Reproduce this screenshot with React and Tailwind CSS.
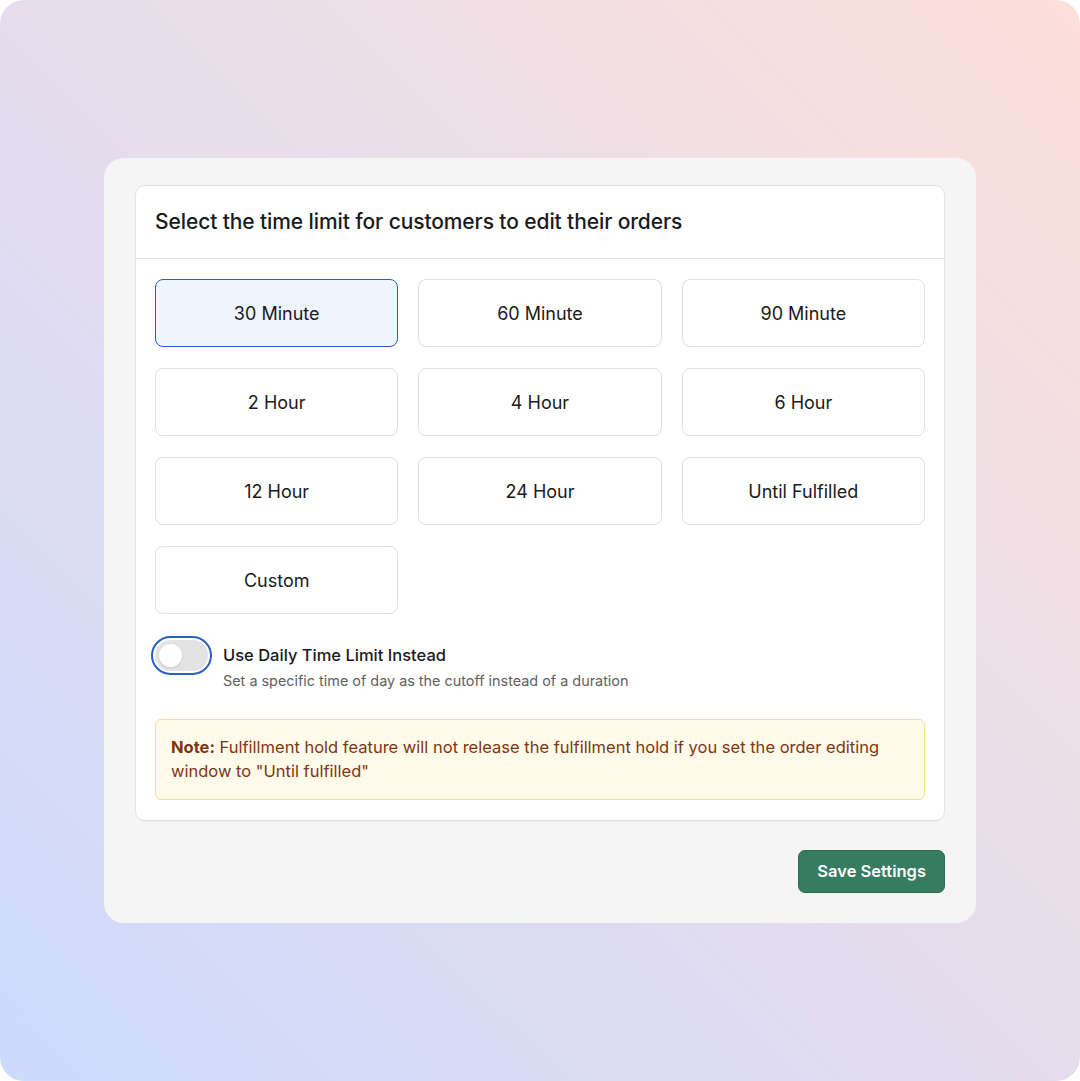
import React, { useState } from 'react';

const OPTIONS = [
  '30 Minute',
  '60 Minute',
  '90 Minute',
  '2 Hour',
  '4 Hour',
  '6 Hour',
  '12 Hour',
  '24 Hour',
  'Until Fulfilled',
  'Custom',
];

const App = () => {
  const [selected, setSelected] = useState('30 Minute');
  const [daily, setDaily] = useState(false);

  return (
    <div className="w-[1080px] h-[1081px] bg-white" style={{ fontFamily: 'Inter, "Noto Sans", sans-serif' }}>
      <div className="w-full h-full rounded-[24px] bg-[linear-gradient(45deg,#ccdafd_0%,#e3dcee_45%,#ecdfe7_65%,#fddfda_100%)] flex items-center justify-center">
        <div className="w-[872px] bg-[#f5f5f5] rounded-[20px] pt-[27px] pb-[30px] px-[31px] flex flex-col">
          <div className="bg-white border border-[#e3e3e3] rounded-[10px] shadow-[0_1px_1px_rgba(0,0,0,0.04)]">
            <div className="h-[73px] px-[19px] flex items-center border-b border-[#e3e3e3]">
              <h2 className="text-[21px] font-medium text-[#1a1a1a] tracking-[-0.1px]">
                Select the time limit for customers to edit their orders
              </h2>
            </div>
            <div className="px-[19px] pt-[20px] pb-[20px]">
              <div className="grid grid-cols-3 gap-x-[20px] gap-y-[21px]">
                {OPTIONS.map((opt) => {
                  const active = opt === selected;
                  return (
                    <button
                      key={opt}
                      onClick={() => setSelected(opt)}
                      className={
                        active
                          ? 'h-[68px] rounded-[8px] border border-[#2c5ec4] bg-[#eef5fe] text-[18px] text-[#1a1a1a]'
                          : 'h-[68px] rounded-[8px] border border-[#e0e0e0] bg-white text-[18px] text-[#1a1a1a]'
                      }
                    >
                      {opt}
                    </button>
                  );
                })}
              </div>

              <div className="mt-[22px] flex items-start gap-[11px]">
                <button
                  onClick={() => setDaily(!daily)}
                  className="-ml-[4px] w-[61px] h-[39px] rounded-full border-[2px] border-[#2c5ec4] p-[2px] shrink-0"
                >
                  <span className="block w-full h-full rounded-full bg-[#e3e3e3] relative">
                    <span
                      className={
                        daily
                          ? 'absolute top-[4px] right-[4px] w-[23px] h-[23px] rounded-full bg-white shadow-sm'
                          : 'absolute top-[4px] left-[4px] w-[23px] h-[23px] rounded-full bg-white shadow-sm'
                      }
                    />
                  </span>
                </button>
                <div className="pt-[8px]">
                  <div className="text-[16.5px] font-medium text-[#1a1a1a] leading-[22px]">Use Daily Time Limit Instead</div>
                  <div className="text-[14.4px] text-[#616161] leading-[20px] mt-[5px]">
                    Set a specific time of day as the cutoff instead of a duration
                  </div>
                </div>
              </div>

              <div className="mt-[28px] rounded-[6px] border border-[#f3e08f] bg-[#fefbeb] px-[15px] pt-[15px] pb-[16px] text-[16.5px] leading-[24px] text-[#7f3514]">
                <p>
                  <strong className="font-bold">Note:</strong> Fulfillment hold feature will not release the fulfillment hold if you set the order editing window to "Until fulfilled"
                </p>
              </div>
            </div>
          </div>

          <div className="flex justify-end mt-[29px]">
            <button className="h-[43px] px-[18px] rounded-[7px] bg-[#367c60] border border-[#2b6b51] text-white text-[16.5px] font-semibold">
              Save Settings
            </button>
          </div>
        </div>
      </div>
    </div>
  );
};

export default App;
